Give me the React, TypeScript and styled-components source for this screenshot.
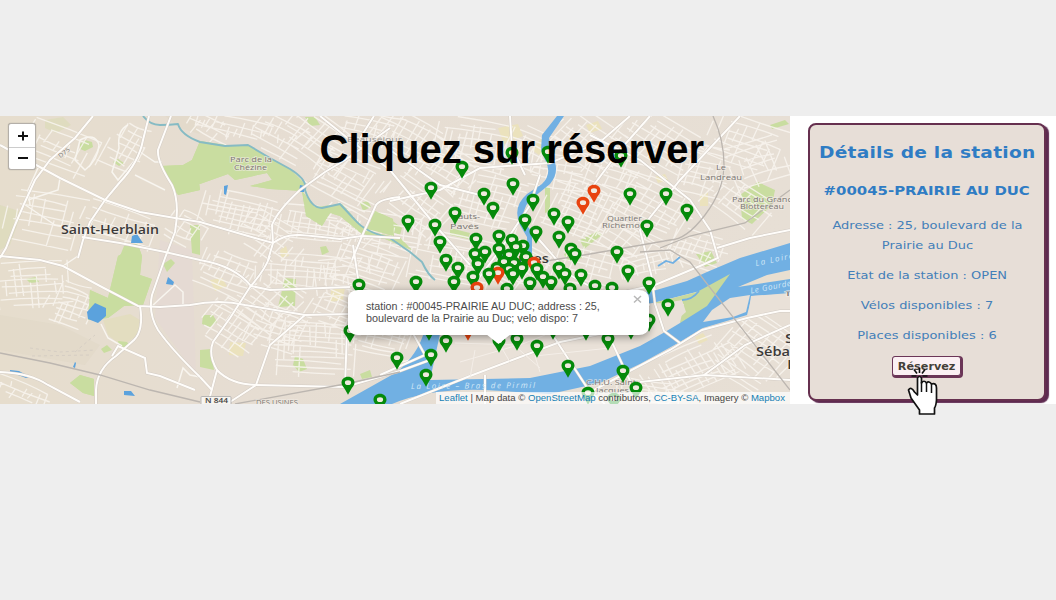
import React from "react";
import styled, { createGlobalStyle } from "styled-components";

const GlobalStyle = createGlobalStyle`
  *, *::before, *::after { box-sizing: border-box; }
  body { margin: 0; background: #eeeeee; }
`;

const Stage = styled.main`
  position: relative;
  width: 1056px;
  height: 600px;
  display: flex;
  flex-direction: column;
  justify-content: flex-start;
  padding-top: 116px;
  background: #eeeeee;
  overflow: hidden;
`;

const Row = styled.section`
  display: flex;
  height: 288px;
  background: #fff;
`;

const MapPane = styled.div`
  position: relative;
  width: 790px;
  height: 288px;
  overflow: hidden;
  background: #e9e1d7;
`;

const MapSvg = styled.svg`
  display: block;
  width: 790px;
  height: 288px;
`;

const Caption = styled.h1`
  position: absolute;
  left: 319.5px;
  top: 126px;
  margin: 0;
  font: bold 40px/46px "Liberation Sans", Arial, sans-serif;
  color: #000;
  white-space: nowrap;
  z-index: 3;
`;

const Wide = styled.span<{ $x: number; $origin?: string }>`
  display: inline-block;
  white-space: nowrap;
  transform: scaleX(${(p) => p.$x});
  transform-origin: ${(p) => p.$origin ?? "center"} center;
`;

const ZoomControl = styled.div`
  position: absolute;
  left: 8px;
  top: 7px;
  width: 28px;
  height: 47px;
  display: flex;
  flex-direction: column;
  background: #fff;
  border: 1px solid #b4afa9;
  border-radius: 3px;
  box-shadow: 0 0 1px rgba(0, 0, 0, 0.35);
`;

const ZoomButton = styled.button`
  flex: 1;
  display: flex;
  align-items: center;
  justify-content: center;
  padding: 1px 0 0 1px;
  border: 0;
  background: none;
  & + & { border-top: 1px solid #ccc; padding-top: 0; }
`;

const Popup = styled.div`
  position: absolute;
  left: 348px;
  top: 174px;
  width: 301px;
  height: 45px;
  padding: 10px 18px;
  border-radius: 10px / 8px;
  background: #fff;
  color: #4a4a4a;
  font: 10px/12px "Liberation Sans", Arial, sans-serif;
  box-shadow: 0 2px 9px rgba(0, 0, 0, 0.4);
`;

const PopupLine = styled.div`
  height: 12px;
  padding-top: 1px;
  line-height: 11px;
`;

const PopupTip = styled.div`
  position: absolute;
  left: 138px;
  top: 44px;
  width: 25px;
  height: 10px;
  background: #fff;
  clip-path: polygon(0 0, 100% 0, 50% 100%);
`;

const CloseButton = styled.button`
  position: absolute;
  right: 7px;
  top: 4px;
  width: 9px;
  height: 10px;
  padding: 0;
  border: 0;
  background: none;
  display: flex;
`;

const Attribution = styled.div`
  position: absolute;
  right: 0;
  bottom: 0;
  width: 354px;
  height: 12px;
  padding-left: 3px;
  background: rgba(255, 255, 255, 0.7);
  color: #444;
  font: 8.6px/13px "Liberation Sans", Arial, sans-serif;
  white-space: nowrap;
`;

const Link = styled.a`
  color: #1580b4;
`;

const Side = styled.aside`
  flex: 1;
  padding: 7px 0 0 18px;
`;

const Card = styled.div`
  width: 238px;
  height: 278px;
  display: flex;
  flex-direction: column;
  align-items: center;
  padding-top: 17px;
  background: #e7ded7;
  border: 2px solid #66304f;
  border-radius: 8px;
  box-shadow: 3px 2px 1px #5e2a50;
  color: #2f7cc4;
  font-family: "DejaVu Sans", Verdana, sans-serif;
`;

const CardTitle = styled.h2`
  margin: 0;
  font-size: 15.5px;
  line-height: 22px;
  letter-spacing: 0.2px;
`;

const StationName = styled.h3`
  margin: 17px 0 0;
  font-size: 12.4px;
  line-height: 20px;
`;

const Detail = styled.p<{ $gap: number }>`
  margin: ${(p) => p.$gap}px 0 0;
  font-size: 10.6px;
  line-height: 20px;
  text-align: center;
  color: #437fb9;
`;

const ReserveButton = styled.button`
  width: 69px;
  height: 20px;
  margin: 11px 2px 0 0;
  padding: 0 0 0 1px;
  border: 1px solid #6b3557;
  border-radius: 3px;
  box-shadow: 1px 1px 0 1px #6b3557;
  background: #fbf0f3;
  color: #444039;
  font: bold 10.4px/18px "DejaVu Sans", Verdana, sans-serif;
`;

const Cursor = styled.svg`
  position: absolute;
  left: 906px;
  top: 367px;
  width: 34px;
  height: 50px;
  z-index: 4;
`;

/* Deterministic pseudo random numbers, so that the small streets are stable. */
const makeRandom = (seed: number) => () => {
  seed = (seed * 16807) % 2147483647;
  return seed / 2147483647;
};

/* cx, cy, width, height, angle, street spacing */
const districts: number[][] = [
  [60, 150, 75, 50, 25, 12], [125, 150, 40, 60, 28, 10], [45, 220, 80, 60, 12, 12],
  [120, 225, 80, 40, 20, 13], [30, 285, 85, 55, -4, 9], [72, 305, 50, 50, 20, 8],
  [185, 230, 40, 40, 30, 8], [240, 130, 90, 24, 15, 9], [240, 215, 80, 50, 14, 8],
  [320, 140, 80, 50, 38, 9], [350, 180, 80, 50, 30, 9], [320, 225, 80, 40, 8, 8],
  [225, 275, 60, 50, 25, 9], [300, 272, 90, 40, 5, 8], [370, 265, 70, 55, 20, 8],
  [235, 325, 65, 60, 35, 9], [315, 350, 90, 65, 3, 7], [385, 335, 60, 65, 15, 8],
  [410, 140, 90, 50, 30, 9], [475, 145, 80, 60, 10, 9], [420, 205, 80, 60, 38, 9],
  [490, 200, 70, 65, 16, 8], [455, 260, 90, 60, 12, 8], [515, 265, 60, 55, 33, 7],
  [590, 145, 80, 60, 40, 9], [580, 210, 75, 70, 24, 8], [660, 145, 90, 60, 35, 9],
  [650, 210, 85, 70, 30, 9], [745, 145, 80, 60, 22, 10], [740, 205, 70, 45, 38, 10],
  [590, 265, 80, 50, 15, 9], [650, 265, 60, 28, -15, 8], [690, 365, 100, 60, -28, 8],
  [755, 355, 75, 85, 38, 9], [650, 392, 70, 25, 10, 8], [20, 392, 65, 22, 25, 10],
  [270, 240, 70, 50, 35, 10], [340, 310, 60, 50, 25, 9], [280, 330, 60, 50, 20, 9],
  [530, 150, 50, 50, 25, 9], [700, 250, 60, 40, 20, 9], [700, 170, 60, 60, 15, 10],
  [370, 130, 70, 40, 15, 11], [450, 170, 70, 50, 35, 11], [390, 235, 70, 50, 8, 11],
  [560, 170, 60, 50, 10, 11], [620, 180, 70, 50, 20, 11], [620, 240, 70, 40, 35, 11],
  [760, 165, 60, 60, -20, 12], [270, 300, 70, 60, 40, 11], [210, 130, 50, 25, 30, 10],
  [280, 140, 60, 45, 30, 11], [345, 280, 60, 50, -5, 11], [350, 225, 60, 30, 35, 10],
];

const streetPath = (() => {
  const rnd = makeRandom(77);
  let d = "";
  districts.forEach(([cx, cy, w, h, angle, spacing]) => {
    const step = spacing * 0.85;
    const a = (angle * Math.PI) / 180;
    const at = (x: number, y: number) => {
      const px = cx + x * Math.cos(a) - y * Math.sin(a);
      const py = cy + (x * Math.sin(a) + y * Math.cos(a)) * 0.85;
      return `${px.toFixed(1)} ${py.toFixed(1)}`;
    };
    for (let y = -h / 2; y < h / 2; y += step * (0.7 + rnd() * 0.6)) {
      const s = -w / 2 + rnd() * w * 0.3;
      const e = w / 2 - rnd() * w * 0.3;
      d += `M${at(s, y)}Q${at((s + e) / 2, y + rnd() * 6 - 3)} ${at(e, y + rnd() * 5 - 2)}`;
    }
    for (let x = -w / 2; x < w / 2; x += step * (0.7 + rnd() * 0.7)) {
      const s = -h / 2 + rnd() * h * 0.5;
      const e = Math.min(h / 2, s + h * (0.25 + rnd() * 0.55));
      d += `M${at(x, s)}L${at(x + rnd() * 4 - 2, e)}`;
    }
  });
  return d;
})();

const greens = [
  "M200 141L225 145 248 145 270 158 290 169 305 184 303 191 270 189 250 186 272 180 267 173 235 180 228 174 200 184 180 178 176 194 165 172 161 166 183 165 192 160Z",
  "M163 166L190 169 199 182 200 190 178 195Z",
  "M118 256L138 245 142 256 140 275 152 279 143 305 124 306 108 318 88 320 90 290 108 298Z",
  "M302 191L315 207 342 204 366 231 400 238 412 250 385 239 362 234 340 216 330 213 322 226 306 216 Z",
  "M375 211L393 219 394 236 367 229Z",
  "M70 383L80 375 94 379 94 396 83 393Z",
  "M285 278L296 279 295 306 278 307Z", "M200 350L211 349 214 370 200 367Z",
  "M203 315h10l4 7-7 5-8-3Z", "M295 356l8 3 4 10-8 3-6-7Z",
  "M740 195L758 182 775 190 772 205 752 224 742 219Z",
  "M80 144l5-4 7 2 1 5-8 4-5-2Z", "M113 162l5-3 6 4-5 3Z", "M120 256l4-10 14-3-2 8-8 7Z",
  "M118 341l9 1 3 4-10 2Z", "M101 349l6-4 5 5-8 3Z", "M26 279l10-2 3 5-9 1Z",
  "M163 264l8-5 4 4-8 9Z", "M360 203l8-2 3 6-8 4Z", "M320 247l6-1 3 6-7 3Z",
  "M190 225l10 0 0 30-8-2Z", "M305 117l10 0 5 8-10 1Z", "M770 307l12-6 8 2v9l-20-1Z",
  "M360 374l10-4 2 7-10 2Z", "M450 228l20 5-2 6-18-4Z", "M390 219l12 9-2 7-10-4Z",
  "M580 240l18-9 4 4-18 14Z", "M545 187l5 0 0 24-5 2Z", "M564 254l14-4 5 8-16 3Z",
  "M696 254l15-3 6 12-12 4Z", "M770 125l15-5 4 4-17 5Z",
];

const yellows = [
  "M498 128l20-4 5 12-19 8Z", "M532 150l9-12 7 9-9 8Z", "M280 250l6-4 3 10-8 2Z",
  "M210 280l12-2 5 8-12 5Z", "M230 342l16 1-3 13-14-1Z", "M331 290l14-3-2 13-13 2Z",
  "M700 196l8-4 0 14-8 0Z", "M695 337l8-4 5 7-9 4Z", "M655 177l10-3 3 6-10 3Z",
  "M586 125l12-4 4 8-12 4Z",
];

const majorRoads = [
  "M0 145L38 166 60 178 105 200 140 212 175 218 200 222 255 238 273 243Q285 234 300 235T340 239L362 236 400 238",
  "M93 116L75 138 50 160 35 180 24 204 15 225 6 248 0 258",
  "M149 116L143 140Q139 162 120 182L105 200 90 222 83 240 78 258",
  "M171 116L158 150Q157 162 172 185 180 202 175 232L165 258 152 295Q148 313 158 330 172 350 200 377",
  "M82 237L120 243 165 252 200 260Q235 266 251 286L270 290 350 287",
  "M0 256L40 260 63 266 100 286 138 306 160 307 190 305Q220 299 245 305L305 315 350 314",
  "M140 306Q144 330 134 340L116 356Q97 369 96 390V404",
  "M0 372Q30 373 48 385L80 402",
  "M270 256Q265 270 250 287L230 318 213 342Q208 355 217 370 230 384 256 385L345 387 400 371 430 360",
  "M305 315L270 345 256 385 230 402", "M217 370L208 404", "M200 377L212 390",
  "M273 243L272 225Q278 210 300 190L325 172 345 160 390 128",
  "M320 116L350 140 390 170 435 225 470 265", "M273 243L268 260",
  "M400 197Q380 199 376 205L362 236 352 260",
  "M374 116L362 135 350 158", "M390 150L440 185 480 195", "M390 201L440 190 480 168 550 163 600 142 630 116",
  "M510 116L512 148 525 175", "M590 135L640 160 690 200 710 230 718 258 700 266 655 285 610 295",
  "M590 190L620 150 650 116", "M655 290L640 230 680 180 740 116", "M717 248L750 238 790 230",
  "M540 175L530 205 500 250 470 290", "M535 235L570 275 600 292 650 305",
  "M400 404L470 376 560 342 620 330", "M485 404V375", "M552 334L590 392 605 404",
  "M610 338L632 385", "M640 382L705 375 790 380", "M790 311L780 311 747 318 702 330 670 350 590 392",
  "M704 375L745 345 790 325",
  "M400 310L425 355 380 375", "M345 386L347 330 353 312", "M353 245L359 285",
  "M112 356L118 346 145 358 147 373 160 376 195 390",
  "M652 280L655 304 664 331 680 343",
];

const minorRoads = [
  "M38 168L28 190 30 205", "M60 178L58 190 28 200", "M80 140Q95 132 99 145 98 160 85 170L75 160Z",
  "M24 204L55 225 70 227 115 236", "M140 152L155 162 162 162", "M135 175L165 190",
  "M128 125Q117 130 119 148L112 172 118 180 135 160", "M63 266L78 256", "M101 324L108 338 122 346",
  "M152 306L175 285 183 292 183 305", "M120 272L126 270 126 256", "M177 388L183 368 190 375 200 377",
  "M400 362L470 350 540 352", "M440 378L450 365 520 350", "M520 368L545 350 600 340",
];

/* x of the pin's axis and y of its top */
const greenPins: number[][] = [
  [512, 146], [548, 145], [621, 149], [462, 160], [431, 181], [513, 177], [484, 187], [493, 201],
  [533, 193], [630, 187], [666, 187], [455, 206], [554, 207], [687, 203], [408, 214], [525, 213],
  [435, 218], [568, 215], [647, 219], [536, 225], [440, 235], [559, 230], [476, 232], [499, 229],
  [512, 233], [523, 239], [499, 242], [516, 240], [485, 245], [475, 247], [571, 242], [575, 247],
  [617, 245], [446, 253], [526, 250], [509, 248], [478, 257], [504, 255], [514, 256], [458, 261],
  [489, 267], [497, 261], [509, 262], [537, 262], [522, 261], [559, 261], [565, 267], [513, 267],
  [543, 270], [581, 268], [628, 264], [473, 270], [416, 275], [454, 275], [530, 276], [551, 275],
  [359, 278], [649, 276], [507, 282], [595, 279], [570, 282], [612, 281], [668, 298], [649, 313],
  [350, 324], [429, 322], [553, 321], [586, 322], [631, 321], [446, 334], [517, 332], [608, 332],
  [499, 334], [537, 339], [431, 348], [397, 351], [568, 359], [426, 368], [623, 364], [348, 376],
  [636, 381], [588, 386], [380, 393], [614, 392],
];
const redPins: number[][] = [[594, 184], [583, 196], [534, 256], [498, 266], [477, 281], [468, 322]];

const pins = [
  ...greenPins.map(([x, y]) => ({ x, y, color: "#058a0a" })),
  ...redPins.map(([x, y]) => ({ x, y, color: "#e8430f" })),
].sort((a, b) => a.y - b.y);

const pinShape = "M0 0C-3.8 0-6.5 2.5-6.5 6-6.5 8.7-4.4 10.2-2.8 13L0 18 2.8 13C4.4 10.2 6.5 8.7 6.5 6 6.5 2.5 3.8 0 0 0Z";

const Pin = ({ x, y, color }: { x: number; y: number; color: string }) => (
  <g transform={`translate(${x} ${y + 0.7})`}>
    <path d={pinShape} fill={color} />
    <ellipse cx="0" cy="6" rx="3.1" ry="2.4" fill="#f0eadf" />
  </g>
);

interface LabelProps {
  x: number; y: number; w: number; size: number; color?: string; bold?: boolean; children: string;
}
const Label = ({ x, y, w, size, color = "#7b7672", bold, children }: LabelProps) => (
  <text
    x={x} y={y + 0.3} textLength={w} lengthAdjust="spacingAndGlyphs" fontSize={size}
    fontFamily='"Open Sans", sans-serif' fontWeight={bold ? 600 : 500} fill={color}
    stroke="#f1ece5" strokeWidth="1.6" strokeOpacity="0.7" paintOrder="stroke"
  >
    {children}
  </text>
);

interface RiverLabelProps { x: number; y: number; w: number; angle: number; children: string; }
const RiverLabel = ({ x, y, w, angle, children }: RiverLabelProps) => (
  <text
    transform={`translate(${x} ${y}) rotate(${angle})`} textLength={w}
    fontFamily='"Open Sans", sans-serif' fontStyle="italic" fontSize="8" fill="#d3e8f7"
  >
    {children}
  </text>
);

const CityMap = () => (
  <MapSvg viewBox="0 116 790 288">
    <defs>
      <linearGradient id="land" x1="0" x2="1" y1="0" y2="0">
        <stop offset="0" stopColor="#e6ddcd" />
        <stop offset="0.3" stopColor="#e6ddd2" />
        <stop offset="1" stopColor="#e7dfd5" />
      </linearGradient>
    </defs>
    <rect y="116" width="790" height="288" fill="url(#land)" />
    <g fill="#dfd8c6">
      <path d="M165 116H192L200 134 180 128ZM0 315L60 325 100 345 85 365 0 350Z" opacity=".5" />
      <path d="M0 205L22 212 10 245 0 250ZM45 120l18-3 8 8-15 8-11-5Z" fill="#dcdcb9" opacity=".7" />
      <path d="M103 320L130 314 140 320 138 335 122 346 108 335Z" fill="#e3ddc0" />
    </g>
    <path d="M160 240L192 250 196 375 155 318Z" fill="#e5dad3" />
    <g fill="#ebe2bd">{yellows.map((d) => <path key={d} d={d} />)}</g>
    <g fill="#c9dda0">{greens.map((d) => <path key={d} d={d} />)}</g>
    <path d={streetPath} fill="none" stroke="#f8f4ee" strokeWidth="1.35" strokeOpacity=".85" />
    <g fill="none" stroke="#f8f5ef" strokeWidth="1.5">{minorRoads.map((d) => <path key={d} d={d} />)}</g>
    <g fill="#c9dda0">{greens.slice(0, 6).map((d) => <path key={d} d={d} />)}</g>

    <g fill="none" stroke="#86bbc4" strokeWidth="1.900" strokeLinejoin="round">
      <path d="M143 116Q150 125 160 125T178 124Q181 135 200 142L225 146 248 145 270 158 290 169Q308 180 305 190 311 208 322 208L340 204 355 220Q365 232 390 238L410 252 422 262Q428 275 435 280" />
    </g>
    <g fill="#5ba2dd">
      <path d="M95 303L106 308 106 316 98 323 88 319 87 312Z" />
      <path d="M10 370l9 1 11 6-4 1-16-6ZM124 391h7l4 5-11-1ZM132 236l5-2 6 9h-12ZM166 284l2-7 6 5-1 3ZM300 185l5 1-1 6-5 0ZM224 186l4-1-2 10-2-1ZM73 367l2-5 1 1-1 5Z" />
    </g>

    <path d="M557 116H564L549 138 552 156Q561 171 550 184L534 197Q521 206 524 222L532 232 532 262 528 262 527 237 520 225Q512 207 527 194L542 184Q552 174 546 162L541 150 542 135Z" fill="#71b0e3" />
    <path
      d="M790 243L740 258 707 272 687 281 653 291 600 298 540 315 470 320 424 332Q418 354 397 372L340 404H392Q430 388 485 390L550 394 600 383 640 364 680 342 703 328 747 315 752 296 790 293Z"
      fill="#71b0e3"
    />
    <path d="M440 334L470 325 540 322 600 310 653 303 700 291 680 323 665 332 640 346 590 366 530 378 430 380Z" fill="#e9e1d8" />
    <path d="M653 303L697 292 730 274 707 306 680 323 684 304Z" fill="#c8d99d" />
    <path d="M655 305L682 300 686 312 665 330Z" fill="#e9e1d8" />
    <path d="M703 322L712 310 730 298 750 295 746 312 733 317Z" fill="#e9e1d8" />
    <path d="M751 296L790 294V310L748 316Z" fill="#e9e1d8" />
    <path d="M738 287L767 275 790 270V279Z" fill="#e9dfd0" />
    <path d="M682 300Q692 300 699 291M658 266L666 261 673 263 680 257" fill="none" stroke="#71b0e3" strokeWidth="1.800" />

    <g fill="none" stroke="#d2cbc4" strokeWidth="2.900">{majorRoads.map((d) => <path key={d} d={d} />)}</g>
    <g fill="none" stroke="#fffdfa" strokeWidth="2">{majorRoads.map((d) => <path key={d} d={d} />)}</g>
    <g fill="none" stroke="#f4eee8" strokeWidth="1">
      <path d="M455 343L520 345 545 335M460 362L515 346 540 368M470 378L475 350M510 362L500 345M540 372L535 356 610 348" />
    </g>
    <g fill="none" stroke="#bcb6b0" strokeWidth="1.3">
      <path d="M0 353L50 363 100 375 150 390 200 402" />
      <path d="M713 116Q724 140 724 165T705 215 670 240L590 254 540 262" />
      <path d="M790 190L745 223 690 236 660 248" />
      <path d="M640 252L670 250 690 262 790 390M235 404L345 384 400 372" />
    </g>
    <path d="M30 348L60 352 95 350M32 356L90 355M75 352L95 335" stroke="#d6cec4" strokeDasharray="3 3" fill="none" />

    <Label x={61} y={234} w={98} size={12} color="#3c3a39" bold>Saint-Herblain</Label>
    <Label x={230} y={162} w={42} size={8}>Parc de la</Label>
    <Label x={234} y={169.5} w={33} size={8}>Chézine</Label>
    <Label x={347} y={142} w={55} size={8} color="#9a9590">Beauséjour</Label>
    <Label x={451} y={219} w={29} size={8}>Hauts-</Label>
    <Label x={450} y={229} w={29} size={8}>Pavés</Label>
    <Label x={716} y={170} w={10} size={8}>Le</Label>
    <Label x={700} y={180} w={42} size={8}>Landreau</Label>
    <Label x={607} y={221} w={35} size={8}>Quartier</Label>
    <Label x={602} y={228} w={47} size={8}>Richemont</Label>
    <Label x={732} y={202} w={61} size={8}>Parc du Grand</Label>
    <Label x={740} y={209} w={44} size={8}>Blottereau</Label>
    <Label x={498} y={262.5} w={51} size={12} color="#3c3a39" bold>Nantes</Label>
    <Label x={785} y={343} w={9} size={12} color="#3c3a39" bold>S</Label>
    <Label x={756} y={356} w={34} size={12} color="#3c3a39" bold>Séba</Label>
    <Label x={787} y={369} w={9} size={12} color="#3c3a39" bold>L</Label>
    <Label x={786} y={296} w={8} size={8}>îl</Label>
    <Label x={586} y={385} w={50} size={8}>C.H.U. Saint</Label>
    <Label x={596} y={393} w={33} size={8}>Jacques</Label>
    <Label x={256} y={405} w={42} size={7}>DES USINES</Label>
    <g transform="translate(60 158) rotate(-38)"><Label x={0} y={0} w={13} size={6}>D75</Label></g>
    <rect x="201" y="396.500" width="30" height="12" rx="1" fill="#f8f6f2" stroke="#aaa" strokeWidth=".8" />
    <Label x={205} y={403} w={23} size={7.5} color="#444" bold>N 844</Label>
    <RiverLabel x={411} y={389} w={124} angle={-0.5}>La Loire – Bras de Pirmil</RiverLabel>
    <RiverLabel x={756} y={266} w={38} angle={-12}>La Loire</RiverLabel>
    <RiverLabel x={751} y={293.5} w={41} angle={-11}>Le Gourde</RiverLabel>

    {pins.map((p) => <Pin key={`${p.x}-${p.y}`} {...p} />)}
  </MapSvg>
);

const App = () => (
  <Stage>
    <GlobalStyle />
    <Caption>Cliquez sur réserver</Caption>
    <Row>
      <MapPane>
        <CityMap />
        <ZoomControl>
          <ZoomButton aria-label="Zoom in">
            <svg width="12" height="10"><path d="M1 5H11M6 .5V9.500" stroke="#111" strokeWidth="2" /></svg>
          </ZoomButton>
          <ZoomButton aria-label="Zoom out">
            <svg width="12" height="10"><path d="M1 5H11" stroke="#111" strokeWidth="2" /></svg>
          </ZoomButton>
        </ZoomControl>
        <Attribution>
          <Wide $x={1.115} $origin="left">
            <Link>Leaflet</Link> | Map data © <Link>OpenStreetMap</Link> contributors, <Link>CC-BY-SA</Link>, Imagery © <Link>Mapbox</Link>
          </Wide>
        </Attribution>
        <Popup>
          <PopupLine><Wide $x={1.07} $origin="left">station : #00045-PRAIRIE AU DUC; address : 25,</Wide></PopupLine>
          <PopupLine><Wide $x={1.08} $origin="left">boulevard de la Prairie au Duc; velo dispo: 7</Wide></PopupLine>
          <CloseButton aria-label="Close">
            <svg width="9" height="10"><path d="M1 2L8 8.500M8 2L1 8.500" stroke="#b8b8b8" strokeWidth="1.500" /></svg>
          </CloseButton>
          <PopupTip />
        </Popup>
      </MapPane>
      <Side>
        <Card>
          <CardTitle><Wide $x={1.2}>Détails de la station</Wide></CardTitle>
          <StationName><Wide $x={1.203}>#00045-PRAIRIE AU DUC</Wide></StationName>
          <Detail $gap={14}><Wide $x={1.227}>Adresse : 25, boulevard de la<br />Prairie au Duc</Wide></Detail>
          <Detail $gap={10}><Wide $x={1.225}>Etat de la station : OPEN</Wide></Detail>
          <Detail $gap={10}><Wide $x={1.225}>Vélos disponibles : 7</Wide></Detail>
          <Detail $gap={10}><Wide $x={1.225}>Places disponibles : 6</Wide></Detail>
          <ReserveButton><Wide $x={1.08}>Réservez</Wide></ReserveButton>
        </Card>
      </Side>
    </Row>
    <Cursor viewBox="906 367 34 50">
      <path d="M919.500 368V373M914 369.500L917 373.500M925 369.500L922 373.500M911.500 376H916.500M922.500 376H927.500" stroke="#111" strokeWidth="1.600" fill="none" />
      <path
        d="M917.500 378Q919.500 375 921.500 378V383Q924 379.500 926.500 383 929 380.500 931.500 384 936.500 382.500 936.500 388V400Q936 406 934.500 408V414H919.500V410L911 398 908.500 390Q911 386 914.500 392L917.500 395Z"
        fill="#fff" stroke="#111" strokeWidth="1.700" strokeLinejoin="round"
      />
      <path d="M921.500 382V392M926.500 383V392M931.500 384V393" stroke="#111" strokeWidth="1.500" />
    </Cursor>
  </Stage>
);

export default App;
